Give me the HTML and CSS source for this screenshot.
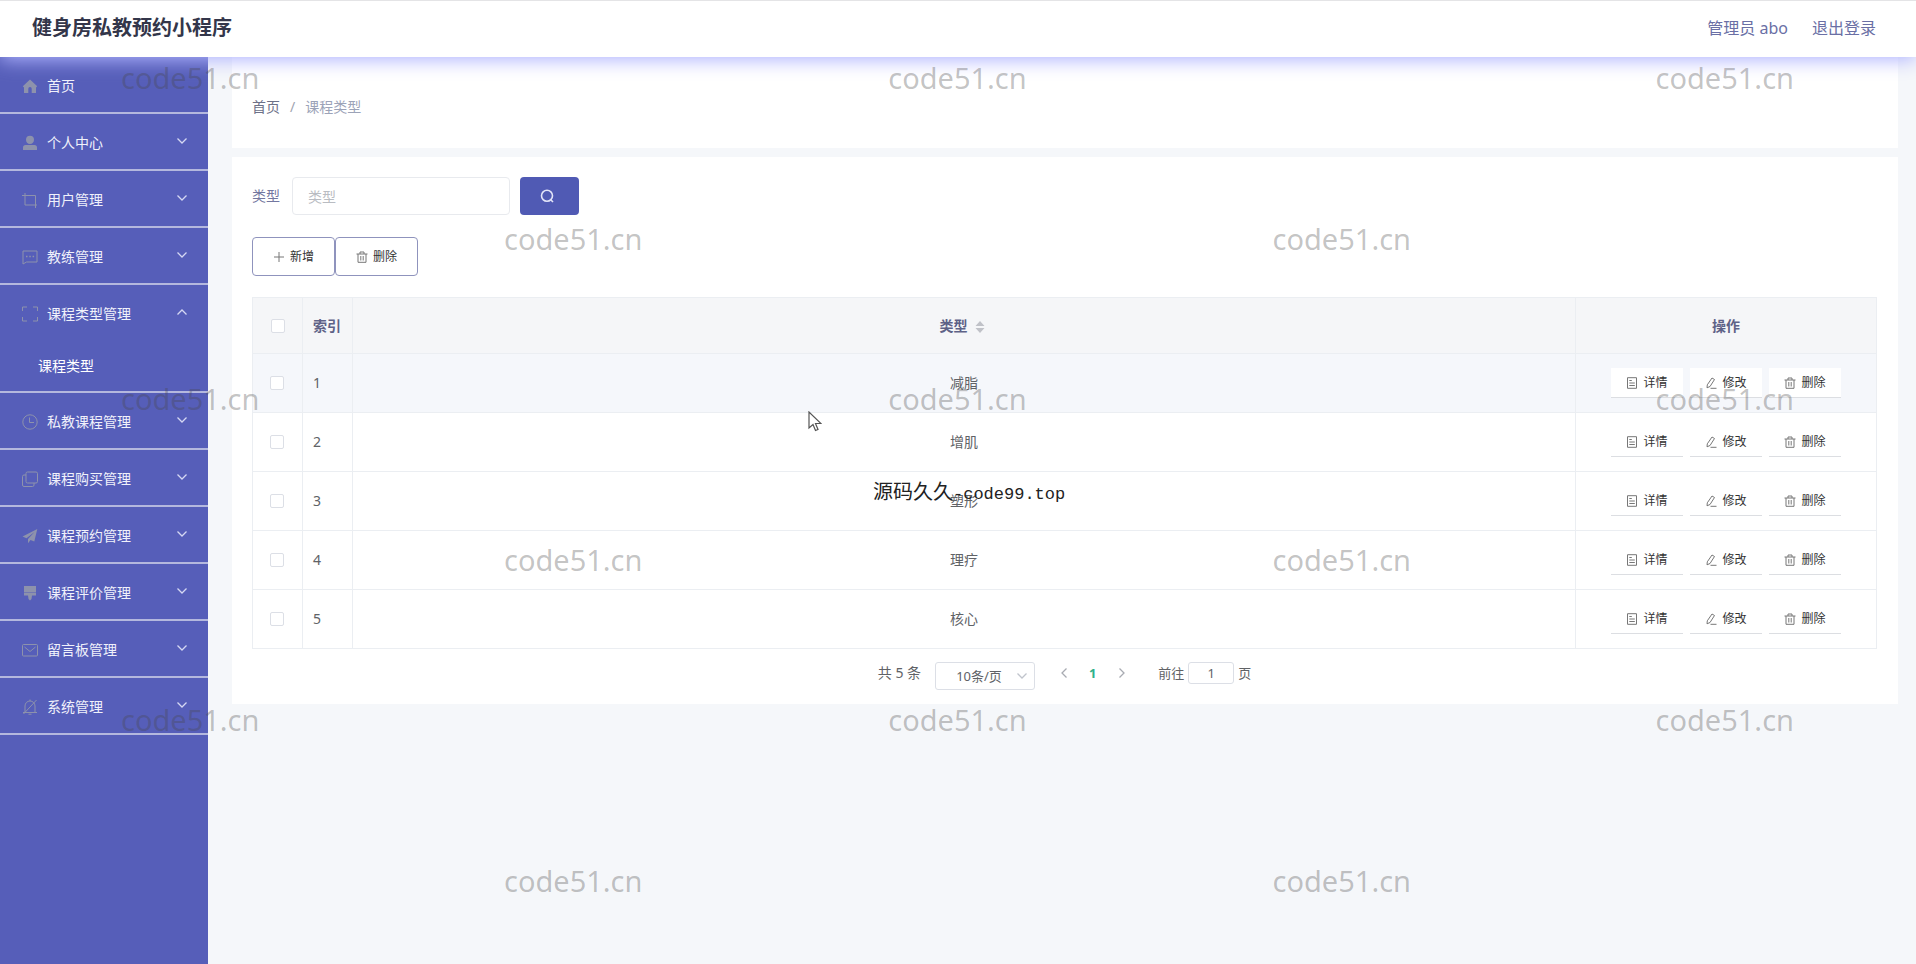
FILE: index.html
```
<!DOCTYPE html>
<html lang="zh-CN">
<head>
    <meta charset="UTF-8">
    <meta name="viewport" content="width=device-width, initial-scale=1.0">
    <title>健身房私教预约小程序</title>
    <link rel="stylesheet" href="styles.css">
</head>
<body>
    <!-- icon set -->
    <svg class="icon-defs" aria-hidden="true">
        <symbol id="i-home" viewBox="0 0 16 16"><path fill="currentColor" d="M8 1.500L.8 8.200 2 9.400V15h4.300v-4.300a1.700 1.700 0 0 1 3.400 0V15H14V9.400l1.200-1.200z"/></symbol>
        <symbol id="i-user" viewBox="0 0 16 16"><path fill="currentColor" d="M8 .800a4 4 0 0 1 4 4c0 2.400-1.600 4.300-4 4.300S4 7.200 4 4.800a4 4 0 0 1 4-4zM3.600 10h8.800A2.600 2.600 0 0 1 15 12.600V15H1v-2.400A2.600 2.600 0 0 1 3.600 10z"/></symbol>
        <symbol id="i-crop" viewBox="0 0 16 16"><path fill="none" stroke="currentColor" d="M3 1v12h12M0 3.500h13.500V16"/></symbol>
        <symbol id="i-chat" viewBox="0 0 16 16"><path fill="none" stroke="currentColor" d="M1 2h14v11H4.500L1 15z"/><path fill="none" stroke="currentColor" stroke-width="1.500" d="M4 7.500h1.500M7.300 7.500h1.500M10.600 7.500h1.500"/></symbol>
        <symbol id="i-full" viewBox="0 0 16 16"><path fill="none" stroke="currentColor" d="M.500 5V1H5M11 1h4.500v4M15.500 11v4H11M5 15H.500v-4"/></symbol>
        <symbol id="i-time" viewBox="0 0 16 16"><circle cx="8" cy="8" r="7.200" fill="none" stroke="currentColor"/><path fill="none" stroke="currentColor" d="M7.500 3.500v5H12"/></symbol>
        <symbol id="i-copy" viewBox="0 0 16 16"><rect x="4" y="1" width="11.500" height="11" rx="1.500" fill="none" stroke="currentColor"/><path fill="none" stroke="currentColor" d="M4 4H2A1.500 1.500 0 0 0 .500 5.500V14A1.500 1.500 0 0 0 2 15.500h8.500A1.500 1.500 0 0 0 12 14v-2"/></symbol>
        <symbol id="i-send" viewBox="0 0 16 16"><path fill="currentColor" d="M15.300 1L.500 8.500l4 1.700L12.500 4 6 11v4.200l2.500-3.300 3.800 1.700z"/></symbol>
        <symbol id="i-brush" viewBox="0 0 16 16"><path fill="currentColor" d="M2 1h12v6H2zM2 7.600h12v3h-4L9.500 14 8 15.500 6.500 14 6 10.600H2z"/></symbol>
        <symbol id="i-mail" viewBox="0 0 16 16"><rect x=".500" y="2.500" width="15" height="11.500" rx="1" fill="none" stroke="currentColor"/><path fill="none" stroke="currentColor" d="M2.500 5L8 9.500 13.500 5"/></symbol>
        <symbol id="i-bell" viewBox="0 0 16 16"><path fill="none" stroke="currentColor" d="M3 13V7a5 5 0 0 1 10 0v6M1 13.500h14M6.500 15.200h3M14.500 1L1.500 15M8 2V.500"/></symbol>
        <symbol id="i-arrow" viewBox="0 0 12 12"><path fill="none" stroke="currentColor" stroke-width="1.300" d="M1.500 3.500L6 8l4.500-4.500"/></symbol>
        <symbol id="i-search" viewBox="0 0 14 14"><circle cx="7" cy="6.800" r="5.500" fill="none" stroke="currentColor" stroke-width="1.600"/><path stroke="currentColor" stroke-width="1.600" d="M10.500 10.500l2.500 2.500"/></symbol>
        <symbol id="i-plus" viewBox="0 0 12 12"><path stroke="currentColor" d="M6 1v10M1 6h10"/></symbol>
        <symbol id="i-delete" viewBox="0 0 12 12"><path fill="none" stroke="currentColor" d="M.500 3h11M2 3v8.300h8V3M4 3V1h4v2M4.800 5v4.500M7.200 5v4.500"/></symbol>
        <symbol id="i-detail" viewBox="0 0 12 12"><path fill="none" stroke="currentColor" d="M1.500.700h9v10.600h-9zM3.300 8.500h5.500M3.300 6h5.500M3.300 3.500h2.500"/></symbol>
        <symbol id="i-edit" viewBox="0 0 12 12"><path fill="none" stroke="currentColor" d="M7 1l2.500 1.500-4.500 7L2 10.800l.300-3zM5.500 11.300h6"/></symbol>
    </svg>

    <header class="header">
        <h1 class="header-title">健身房私教预约小程序</h1>
        <nav class="header-nav">
            <a href="#">管理员 abo</a>
            <a href="#">退出登录</a>
        </nav>
    </header>

    <div class="layout">
        <nav class="sidebar">
            <div class="menu-group"><button class="menu-item"><svg class="menu-icon"><use href="#i-home"/></svg>首页</button></div>
            <div class="menu-group"><button class="menu-item"><svg class="menu-icon"><use href="#i-user"/></svg>个人中心<svg class="menu-arrow"><use href="#i-arrow"/></svg></button></div>
            <div class="menu-group"><button class="menu-item"><svg class="menu-icon"><use href="#i-crop"/></svg>用户管理<svg class="menu-arrow"><use href="#i-arrow"/></svg></button></div>
            <div class="menu-group"><button class="menu-item"><svg class="menu-icon"><use href="#i-chat"/></svg>教练管理<svg class="menu-arrow"><use href="#i-arrow"/></svg></button></div>
            <div class="menu-group">
                <button class="menu-item" aria-expanded="true"><svg class="menu-icon"><use href="#i-full"/></svg>课程类型管理<svg class="menu-arrow open"><use href="#i-arrow"/></svg></button>
                <a class="submenu-item" href="#">课程类型</a>
            </div>
            <div class="menu-group"><button class="menu-item"><svg class="menu-icon"><use href="#i-time"/></svg>私教课程管理<svg class="menu-arrow"><use href="#i-arrow"/></svg></button></div>
            <div class="menu-group"><button class="menu-item"><svg class="menu-icon"><use href="#i-copy"/></svg>课程购买管理<svg class="menu-arrow"><use href="#i-arrow"/></svg></button></div>
            <div class="menu-group"><button class="menu-item"><svg class="menu-icon"><use href="#i-send"/></svg>课程预约管理<svg class="menu-arrow"><use href="#i-arrow"/></svg></button></div>
            <div class="menu-group"><button class="menu-item"><svg class="menu-icon"><use href="#i-brush"/></svg>课程评价管理<svg class="menu-arrow"><use href="#i-arrow"/></svg></button></div>
            <div class="menu-group"><button class="menu-item"><svg class="menu-icon"><use href="#i-mail"/></svg>留言板管理<svg class="menu-arrow"><use href="#i-arrow"/></svg></button></div>
            <div class="menu-group"><button class="menu-item"><svg class="menu-icon"><use href="#i-bell"/></svg>系统管理<svg class="menu-arrow"><use href="#i-arrow"/></svg></button></div>
        </nav>

        <main class="main">
            <div class="card breadcrumb">
                <a href="#">首页</a><span class="separator">/</span><span class="current">课程类型</span>
            </div>

            <section class="card content">
                <form class="search-form">
                    <label for="type">类型</label>
                    <input id="type" class="search-input" type="text" placeholder="类型">
                    <button class="search-btn" type="button" aria-label="查询"><svg class="search-icon"><use href="#i-search"/></svg></button>
                </form>

                <div class="toolbar">
                    <button class="tool-btn"><svg class="btn-icon"><use href="#i-plus"/></svg>新增</button>
                    <button class="tool-btn"><svg class="btn-icon"><use href="#i-delete"/></svg>删除</button>
                </div>

                <table class="table">
                    <colgroup>
                        <col class="col-check">
                        <col class="col-index">
                        <col>
                        <col class="col-actions">
                    </colgroup>
                    <thead>
                        <tr>
                            <th class="check-all"><input type="checkbox" aria-label="全选"></th>
                            <th class="index">索引</th>
                            <th>类型<svg class="sort" viewBox="0 0 10 14"><path fill="currentColor" d="M5 1l4.500 5h-9zM5 13l4.500-5h-9z"/></svg></th>
                            <th>操作</th>
                        </tr>
                    </thead>
                    <tbody>
                        <tr class="hover">
                            <td class="check"><input type="checkbox" aria-label="选择 1"></td>
                            <td class="index">1</td>
                            <td>减脂</td>
                            <td><div class="actions">
                                <button class="action-btn"><svg class="btn-icon"><use href="#i-detail"/></svg>详情</button>
                                <button class="action-btn"><svg class="btn-icon"><use href="#i-edit"/></svg>修改</button>
                                <button class="action-btn"><svg class="btn-icon"><use href="#i-delete"/></svg>删除</button>
                            </div></td>
                        </tr>
                        <tr>
                            <td class="check"><input type="checkbox" aria-label="选择 2"></td>
                            <td class="index">2</td>
                            <td>增肌</td>
                            <td><div class="actions">
                                <button class="action-btn"><svg class="btn-icon"><use href="#i-detail"/></svg>详情</button>
                                <button class="action-btn"><svg class="btn-icon"><use href="#i-edit"/></svg>修改</button>
                                <button class="action-btn"><svg class="btn-icon"><use href="#i-delete"/></svg>删除</button>
                            </div></td>
                        </tr>
                        <tr>
                            <td class="check"><input type="checkbox" aria-label="选择 3"></td>
                            <td class="index">3</td>
                            <td>塑形</td>
                            <td><div class="actions">
                                <button class="action-btn"><svg class="btn-icon"><use href="#i-detail"/></svg>详情</button>
                                <button class="action-btn"><svg class="btn-icon"><use href="#i-edit"/></svg>修改</button>
                                <button class="action-btn"><svg class="btn-icon"><use href="#i-delete"/></svg>删除</button>
                            </div></td>
                        </tr>
                        <tr>
                            <td class="check"><input type="checkbox" aria-label="选择 4"></td>
                            <td class="index">4</td>
                            <td>理疗</td>
                            <td><div class="actions">
                                <button class="action-btn"><svg class="btn-icon"><use href="#i-detail"/></svg>详情</button>
                                <button class="action-btn"><svg class="btn-icon"><use href="#i-edit"/></svg>修改</button>
                                <button class="action-btn"><svg class="btn-icon"><use href="#i-delete"/></svg>删除</button>
                            </div></td>
                        </tr>
                        <tr>
                            <td class="check"><input type="checkbox" aria-label="选择 5"></td>
                            <td class="index">5</td>
                            <td>核心</td>
                            <td><div class="actions">
                                <button class="action-btn"><svg class="btn-icon"><use href="#i-detail"/></svg>详情</button>
                                <button class="action-btn"><svg class="btn-icon"><use href="#i-edit"/></svg>修改</button>
                                <button class="action-btn"><svg class="btn-icon"><use href="#i-delete"/></svg>删除</button>
                            </div></td>
                        </tr>
                    </tbody>
                </table>

                <div class="pagination">
                    <span class="total">共 5 条</span>
                    <div class="page-size">
                        <select aria-label="每页条数">
                            <option>10条/页</option>
                            <option>20条/页</option>
                            <option>50条/页</option>
                        </select>
                        <svg class="select-arrow"><use href="#i-arrow"/></svg>
                    </div>
                    <div class="pager">
                        <button class="page-btn" aria-label="上一页"><svg class="page-arrow prev"><use href="#i-arrow"/></svg></button>
                        <button class="page-btn active">1</button>
                        <button class="page-btn" aria-label="下一页"><svg class="page-arrow next"><use href="#i-arrow"/></svg></button>
                    </div>
                    <label class="jump">前往<input type="text" value="1">页</label>
                </div>
            </section>
        </main>
    </div>

    <!-- watermark layer -->
    <div class="watermark" aria-hidden="true">
        <div class="mark-row"><span>code51.cn</span><span>code51.cn</span><span>code51.cn</span></div>
        <div class="mark-row even"><span>code51.cn</span><span>code51.cn</span></div>
        <div class="mark-row"><span>code51.cn</span><span>code51.cn</span><span>code51.cn</span></div>
        <div class="mark-row even"><span>code51.cn</span><span>code51.cn</span></div>
        <div class="mark-row"><span>code51.cn</span><span>code51.cn</span><span>code51.cn</span></div>
        <div class="mark-row even"><span>code51.cn</span><span>code51.cn</span></div>
    </div>
    <div class="source-mark">源码久久<span class="source-url">-code99.top</span></div>
    <svg class="cursor" viewBox="0 0 14 21" aria-hidden="true"><path fill="#fff" stroke="#555" stroke-width="1.200" d="M1 1v16l4-3.500 2.500 6 2.500-1-2.500-6H13z"/></svg>
</body>
</html>
```
FILE: styles.css
```
* {
    box-sizing: border-box;
}

body {
    margin: 0;
    min-height: 100vh;
    display: flex;
    flex-direction: column;
    position: relative;
    background: #f5f7fa;
    color: #606266;
    font-family: "Noto Sans", "Noto Sans CJK SC", sans-serif;
    font-size: 14px;
    line-height: 20px;
}

button,
input,
select {
    font: inherit;
    color: inherit;
}

button {
    cursor: pointer;
}

a {
    color: inherit;
    text-decoration: none;
}

.icon-defs {
    position: absolute;
    width: 0;
    height: 0;
}

/* header */
.header {
    display: flex;
    justify-content: space-between;
    align-items: center;
    height: 57px;
    padding: 0 40px 2px 32px;
    background: #fff;
    border-top: 1px solid #e4e4e6;
    box-shadow: 0 3px 18px #b0b4ff;
    position: relative;
    z-index: 1;
}

.header-title {
    margin: 0;
    font-size: 20px;
    line-height: 28px;
    color: #33364a;
}

.header-nav {
    display: flex;
    gap: 24px;
    font-size: 16px;
    color: #6a6fa5;
}

.layout {
    flex: 1;
    display: flex;
}

/* sidebar */
.sidebar {
    flex: none;
    width: 208px;
    background: #565eb9;
}

.menu-group {
    border-bottom: 2px solid #b4b8de;
}

.menu-item {
    display: flex;
    align-items: center;
    width: 100%;
    height: 55px;
    padding: 2px 20px 0 22px;
    border: 0;
    background: none;
    color: #f0f1fb;
}

.menu-icon {
    width: 16px;
    height: 16px;
    margin-right: 9px;
    color: #8d92ac;
}

.menu-arrow {
    width: 12px;
    height: 12px;
    margin: 0 0 4px auto;
    color: #d5d8f3;
}

.menu-arrow.open {
    transform: rotate(180deg);
}

.submenu-item {
    display: block;
    padding-left: 38px;
    line-height: 51px;
    color: #fff;
}

/* main */
.main {
    flex: 1;
    padding: 0 18px 0 24px;
}

.card {
    background: #fff;
}

.breadcrumb {
    display: flex;
    gap: 10px;
    height: 91px;
    padding: 40px 20px 0;
    margin-bottom: 9px;
    color: #6d7188;
}

.separator {
    color: #a0a3b0;
}

.current {
    color: #9ca3b8;
}

.content {
    padding: 20px 21px 14px 20px;
}

.search-form {
    display: flex;
    align-items: center;
    color: #7377a0;
}

.search-input {
    width: 218px;
    height: 38px;
    margin: 0 10px 0 12px;
    padding: 0 15px;
    border: 1px solid #e8eaee;
    border-radius: 4px;
}

.search-input::placeholder {
    color: #b9bcc2;
}

.search-btn {
    display: flex;
    align-items: center;
    width: 59px;
    height: 38px;
    padding: 0 20px;
    border: 0;
    border-radius: 4px;
    background: #505ab4;
    color: #e2e4f8;
}

.search-icon {
    width: 14px;
    height: 14px;
}

.toolbar {
    display: flex;
    margin: 22px 0 21px;
}

.tool-btn {
    display: flex;
    justify-content: center;
    align-items: center;
    gap: 5px;
    width: 83px;
    height: 39px;
    padding: 0;
    border: 1px solid #8f93bd;
    border-radius: 4px;
    background: #fff;
    color: #333;
    font-size: 12px;
}

.btn-icon {
    width: 12px;
    height: 12px;
    color: #777;
}

/* table */
.table {
    width: 100%;
    table-layout: fixed;
    border-collapse: collapse;
    text-align: center;
}

.col-check,
.col-index {
    width: 50px;
}

.col-actions {
    width: 301px;
}

.table th,
.table td {
    height: 59px;
    padding: 0;
    border: 1px solid #ebeef2;
}

.table th {
    height: 56px;
    background: #f5f6f8;
    color: #5e6287;
    font-weight: 700;
}

.table .hover {
    background: #f5f7fb;
}

.table .index {
    padding-left: 10px;
    text-align: left;
}

.table input {
    appearance: none;
    display: block;
    width: 14px;
    height: 14px;
    margin: 0 0 0 17px;
    border: 1px solid #dcdfe6;
    border-radius: 2px;
    background: #fff;
}

.table .check-all input {
    margin-left: 18px;
}

.sort {
    width: 10px;
    height: 14px;
    margin: 0 4px 0 7px;
    vertical-align: middle;
    color: #c0c2c8;
}

.actions {
    display: flex;
    justify-content: center;
    gap: 7px;
}

.action-btn {
    display: flex;
    justify-content: center;
    align-items: center;
    gap: 5px;
    width: 72px;
    height: 30px;
    padding: 0;
    border: 0;
    border-bottom: 1px solid #dcdee2;
    background: #fff;
    color: #333;
    font-size: 12px;
}

/* pagination */
.pagination {
    display: flex;
    justify-content: center;
    align-items: flex-start;
    margin-top: 13px;
    font-size: 13px;
    line-height: 22px;
}

.total {
    font-size: 14px;
}

.page-size {
    position: relative;
    margin: 0 14px;
}

.page-size select {
    appearance: none;
    display: block;
    width: 100px;
    height: 28px;
    padding: 0 20px;
    border: 1px solid #dcdfe6;
    border-radius: 3px;
    background: #fff;
}

.select-arrow {
    position: absolute;
    right: 7px;
    top: 8px;
    width: 12px;
    height: 12px;
    color: #c0c4cc;
    pointer-events: none;
}

.pager {
    display: flex;
    margin-right: 22px;
}

.page-btn {
    display: flex;
    justify-content: center;
    align-items: center;
    width: 29px;
    height: 22px;
    padding: 0;
    border: 0;
    background: none;
}

.page-btn.active {
    color: #2fb08a;
    font-weight: 700;
}

.page-arrow {
    width: 12px;
    height: 12px;
    color: #a8abb2;
}

.page-arrow.prev {
    transform: rotate(90deg);
}

.page-arrow.next {
    transform: rotate(-90deg);
}

.jump {
    display: flex;
}

.jump input {
    width: 46px;
    height: 22px;
    margin: 0 4px;
    padding: 0;
    border: 1px solid #dcdfe6;
    border-radius: 3px;
    text-align: center;
}

/* overlays */
.watermark {
    position: absolute;
    inset: 0;
    z-index: 2;
    display: flex;
    flex-direction: column;
    justify-content: space-between;
    padding: 58px 0 63px;
    color: rgba(70, 70, 70, 0.33);
    font-family: "Noto Sans", sans-serif;
    font-size: 29px;
    line-height: 40px;
    pointer-events: none;
}

.mark-row {
    display: flex;
    justify-content: space-between;
    padding: 0 122px 0 121px;
}

.mark-row.even {
    padding: 0 505px 0 504px;
}

.source-mark {
    position: absolute;
    left: 873px;
    top: 478px;
    z-index: 3;
    color: #222;
    font-size: 20px;
    line-height: 28px;
    white-space: nowrap;
    pointer-events: none;
}

.source-url {
    font-family: "Liberation Mono", monospace;
    font-size: 17px;
}

.cursor {
    position: absolute;
    left: 808px;
    top: 411px;
    z-index: 3;
    width: 14px;
    height: 21px;
    pointer-events: none;
}
```
